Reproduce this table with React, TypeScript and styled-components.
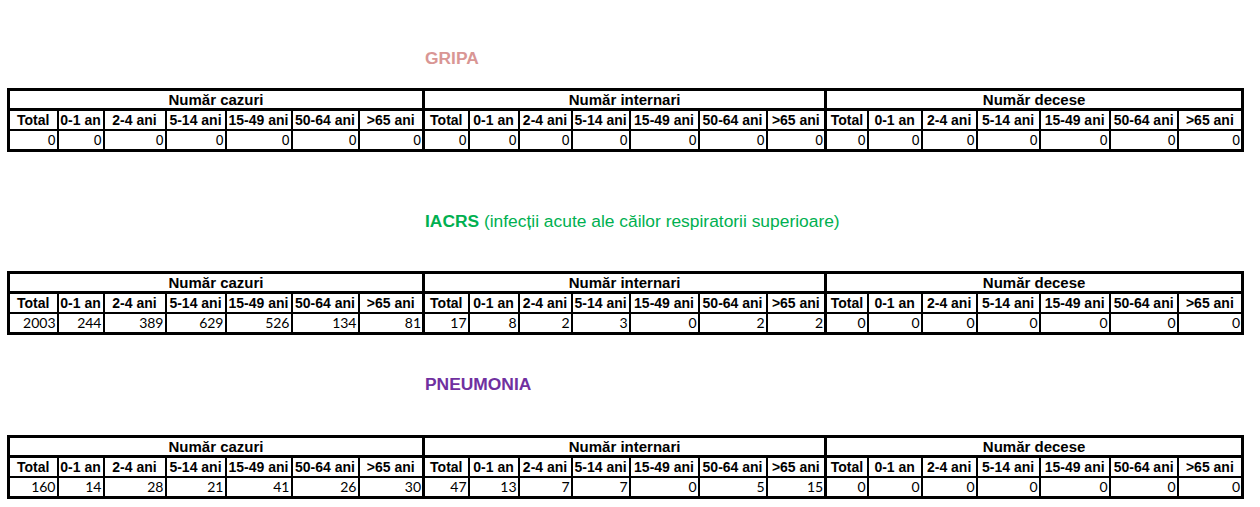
import React from 'react';
import styled, { createGlobalStyle } from 'styled-components';

const GlobalStyle = createGlobalStyle`
  html, body { margin: 0; padding: 0; background: #ffffff; }
  body { font-family: "Liberation Sans", Arial, sans-serif; color: #000; }
`;

const Page = styled.main`
  width: 1260px;
  box-sizing: border-box;
  padding: 48px 0 0 7px;
`;

const Section = styled.section<{ $top: number }>`
  margin-top: ${(p) => p.$top}px;
`;

const Title = styled.h2<{ $color: string; $gap: number }>`
  margin: 0 0 ${(p) => p.$gap}px 418px;
  font-family: "Liberation Sans", Arial, sans-serif;
  font-size: 17.4px;
  line-height: 21px;
  font-weight: normal;
  color: ${(p) => p.$color};
  white-space: nowrap;

  strong {
    font-weight: bold;
  }
`;

const Grid = styled.table`
  border-collapse: collapse;
  table-layout: fixed;
  width: 1234px;
  border: 3px solid #000;
`;

const GroupHead = styled.th`
  border: 3px solid #000;
  padding: 0;
  height: 17px;
  font: bold 15px/17px "Liberation Sans", Arial, sans-serif;
  text-align: center;
  white-space: nowrap;
`;

const ColHead = styled.th<{ $first?: boolean }>`
  border: 2px solid #000;
  border-left-width: ${(p) => (p.$first ? 3 : 2)}px;
  padding: 0;
  height: 18px;
  font: bold 14px/18px "Liberation Sans", Arial, sans-serif;
  text-align: center;
  white-space: nowrap;
  overflow: hidden;
`;

const Value = styled.td<{ $first?: boolean; $alt?: boolean }>`
  border: 2px solid #000;
  border-left-width: ${(p) => (p.$first ? 3 : 2)}px;
  border-bottom-width: 3px;
  padding: 0 1px 0 0;
  height: 18px;
  font-family: ${(p) =>
    p.$alt ? 'Lato, "Open Sans", sans-serif' : '"Liberation Sans", Arial, sans-serif'};
  font-size: 14px;
  line-height: 18px;
  text-align: right;
  white-space: nowrap;
`;

const widths = [49, 46, 62, 60, 66, 67, 65, 45, 50, 53, 58, 69, 68, 59, 42, 54, 55, 63, 70, 68, 65];
const ages = ['Total', '0-1 an', '2-4 ani', '5-14 ani', '15-49 ani', '50-64 ani', '>65 ani'];
const groups = ['Număr cazuri', 'Număr internari', 'Număr decese'];

type Block = {
  key: string;
  color: string;
  bold: string;
  rest?: string;
  top: number;
  gap: number;
  alt: boolean;
  values: number[];
};

const blocks: Block[] = [
  {
    key: 'gripa',
    color: '#d99694',
    bold: 'GRIPA',
    top: 0,
    gap: 19,
    alt: false,
    values: Array(21).fill(0),
  },
  {
    key: 'iacrs',
    color: '#00b050',
    bold: 'IACRS',
    rest: ' (infecții acute ale căilor respiratorii superioare)',
    top: 59,
    gap: 39,
    alt: true,
    values: [2003, 244, 389, 629, 526, 134, 81, 17, 8, 2, 3, 0, 2, 2, 0, 0, 0, 0, 0, 0, 0],
  },
  {
    key: 'pneumonia',
    color: '#7030a0',
    bold: 'PNEUMONIA',
    top: 39,
    gap: 40,
    alt: true,
    values: [160, 14, 28, 21, 41, 26, 30, 47, 13, 7, 7, 0, 5, 15, 0, 0, 0, 0, 0, 0, 0],
  },
];

const StatsTable: React.FC<{ values: number[]; alt: boolean }> = ({ values, alt }) => (
  <Grid>
    <colgroup>
      {widths.map((w, i) => (
        <col key={i} style={{ width: w }} />
      ))}
    </colgroup>
    <thead>
      <tr>
        {groups.map((g) => (
          <GroupHead key={g} colSpan={7}>
            {g}
          </GroupHead>
        ))}
      </tr>
      <tr>
        {groups.flatMap((g) =>
          ages.map((a, i) => (
            <ColHead key={g + a} $first={i === 0}>
              {a}
            </ColHead>
          ))
        )}
      </tr>
    </thead>
    <tbody>
      <tr>
        {values.map((v, i) => (
          <Value key={i} $first={i % 7 === 0} $alt={alt}>
            {v}
          </Value>
        ))}
      </tr>
    </tbody>
  </Grid>
);

export default function App() {
  return (
    <>
      <GlobalStyle />
      <Page>
        {blocks.map((b) => (
          <Section key={b.key} $top={b.top}>
            <Title $color={b.color} $gap={b.gap}>
              <strong>{b.bold}</strong>
              {b.rest}
            </Title>
            <StatsTable values={b.values} alt={b.alt} />
          </Section>
        ))}
      </Page>
    </>
  );
}
